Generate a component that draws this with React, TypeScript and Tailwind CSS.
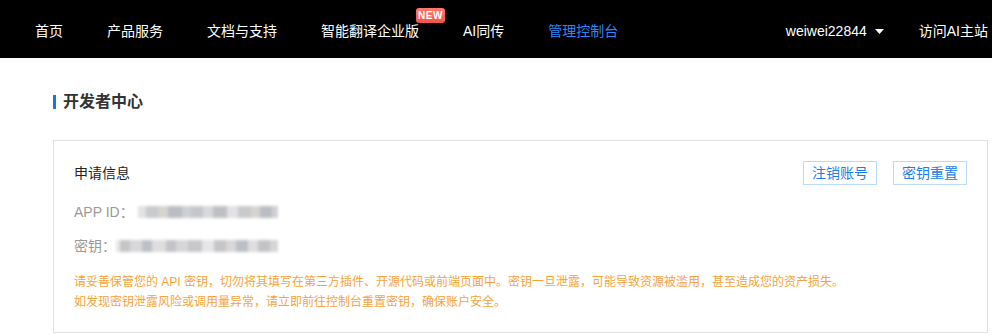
import React from "react";

const font = { fontFamily: '"Liberation Sans", "Noto Sans CJK SC", sans-serif' };

function Blurred({ widths, colors, className }: { widths: number[]; colors: string[]; className?: string }) {
  return (
    <div className={"flex items-center blur-[1.5px] " + (className || "")}>
      {widths.map((w, i) => (
        <span key={i} style={{ width: w, background: colors[i % colors.length] }} className="h-[12px] block" />
      ))}
    </div>
  );
}

export default function App() {
  const navItems = ["首页", "产品服务", "文档与支持", "智能翻译企业版", "AI同传", "管理控制台"];
  return (
    <div className="w-[992px] h-[335px] bg-white overflow-hidden" style={font}>
      <div className="h-[58px] bg-black flex items-center pt-[4px] pl-[35px] pr-[4px] text-[14px] text-white">
        <div className="flex items-center gap-[44px]">
          {navItems.map((t) => (
            <div key={t} className={"relative leading-[20px] " + (t === "管理控制台" ? "text-[#2f86f6]" : "text-white")}>
              {t}
              {t === "智能翻译企业版" && (
                <span className="absolute left-[95px] top-[-13px] w-[29px] h-[15px] rounded-[3px] bg-gradient-to-b from-[#ff7a6b] to-[#f0534a] text-white text-[10px] font-bold leading-[15px] text-center tracking-[0.5px]">
                  NEW
                </span>
              )}
            </div>
          ))}
        </div>
        <div className="ml-auto flex items-center">
          <span className="leading-[20px]">weiwei22844</span>
          <svg width="9" height="5" viewBox="0 0 9 5" className="ml-[8px]">
            <path d="M0 0 L9 0 L4.5 5 Z" fill="#fff" />
          </svg>
          <span className="ml-[35px] leading-[20px]">访问AI主站</span>
        </div>
      </div>

      <div className="pl-[53px]">
        <div className="mt-[36px] flex items-center h-[16px]">
          <span className="w-[3px] h-[14px] bg-[#1677e6]" />
          <span className="ml-[7px] text-[16px] font-bold text-[#333] leading-[16px]">开发者中心</span>
        </div>

        <div className="mt-[30px] w-[935px] border border-[#e0e0e0] px-[20px] pt-[20px] pb-[20px]">
          <div className="flex items-center h-[24px]">
            <span className="text-[14px] text-[#222]">申请信息</span>
            <div className="ml-auto flex gap-[16px]">
              <button className="w-[74px] h-[24px] border border-[#b8dbfd] text-[#1a7fee] text-[14px] leading-[22px]">注销账号</button>
              <button className="w-[74px] h-[24px] border border-[#b8dbfd] text-[#1a7fee] text-[14px] leading-[22px]">密钥重置</button>
            </div>
          </div>
          <div className="h-[34px] mt-[10px] flex items-center text-[14px] text-[#999]">
            <span>APP ID：</span>
            <Blurred
              className="ml-[4px]"
              widths={[8, 12, 10, 14, 9, 12, 10, 14, 11, 13, 9, 12, 6]}
              colors={["#e2e2e4", "#c9cacd", "#d6d4d0", "#babdc3", "#cfd0d3", "#c4c6cb", "#d9d9dc", "#bfc0c4"]}
            />
          </div>
          <div className="h-[34px] flex items-center text-[14px] text-[#999]">
            <span>密钥：</span>
            <Blurred
              className="ml-[0px]"
              widths={[4, 10, 12, 10, 14, 10, 12, 14, 12, 12, 10, 12, 10, 12, 8]}
              colors={["#e6e6e8", "#c6c4c6", "#d8d8db", "#bcc0c6", "#dedede", "#c3c3c7", "#d6d6d8", "#c8c6c8"]}
            />
          </div>
          <div className="mt-[9px] text-[12px] leading-[20px] text-[#f7a33a]">
            <div>请妥善保管您的 API 密钥，切勿将其填写在第三方插件、开源代码或前端页面中。密钥一旦泄露，可能导致资源被滥用，甚至造成您的资产损失。</div>
            <div>如发现密钥泄露风险或调用量异常，请立即前往控制台重置密钥，确保账户安全。</div>
          </div>
        </div>
      </div>
    </div>
  );
}
